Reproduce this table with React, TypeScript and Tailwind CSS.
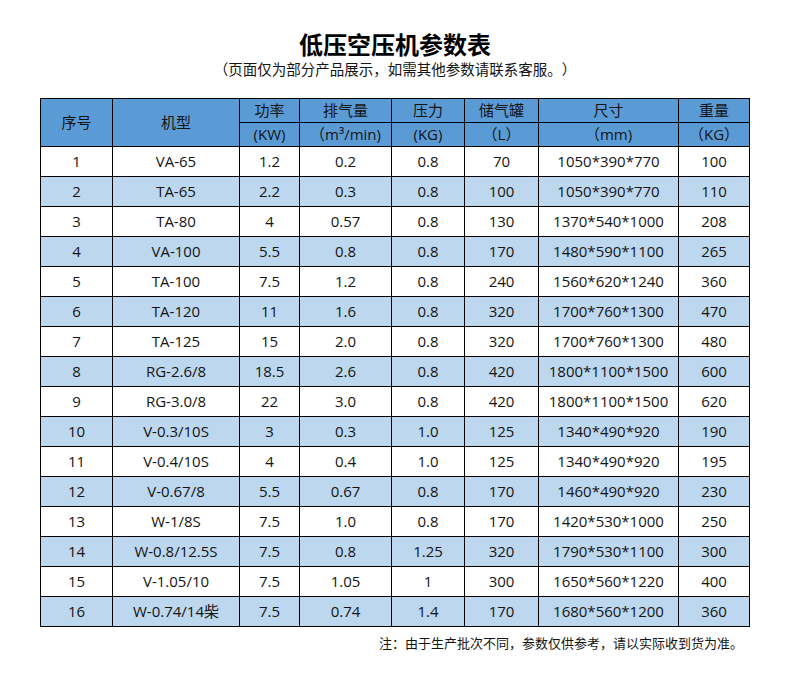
import React from "react";

type Row = [string, string, string, string, string, string, string, string];

const rows: Row[] = [
  ["1", "VA-65", "1.2", "0.2", "0.8", "70", "1050*390*770", "100"],
  ["2", "TA-65", "2.2", "0.3", "0.8", "100", "1050*390*770", "110"],
  ["3", "TA-80", "4", "0.57", "0.8", "130", "1370*540*1000", "208"],
  ["4", "VA-100", "5.5", "0.8", "0.8", "170", "1480*590*1100", "265"],
  ["5", "TA-100", "7.5", "1.2", "0.8", "240", "1560*620*1240", "360"],
  ["6", "TA-120", "11", "1.6", "0.8", "320", "1700*760*1300", "470"],
  ["7", "TA-125", "15", "2.0", "0.8", "320", "1700*760*1300", "480"],
  ["8", "RG-2.6/8", "18.5", "2.6", "0.8", "420", "1800*1100*1500", "600"],
  ["9", "RG-3.0/8", "22", "3.0", "0.8", "420", "1800*1100*1500", "620"],
  ["10", "V-0.3/10S", "3", "0.3", "1.0", "125", "1340*490*920", "190"],
  ["11", "V-0.4/10S", "4", "0.4", "1.0", "125", "1340*490*920", "195"],
  ["12", "V-0.67/8", "5.5", "0.67", "0.8", "170", "1460*490*920", "230"],
  ["13", "W-1/8S", "7.5", "1.0", "0.8", "170", "1420*530*1000", "250"],
  ["14", "W-0.8/12.5S", "7.5", "0.8", "1.25", "320", "1790*530*1100", "300"],
  ["15", "V-1.05/10", "7.5", "1.05", "1", "300", "1650*560*1220", "400"],
  ["16", "W-0.74/14柴", "7.5", "0.74", "1.4", "170", "1680*560*1200", "360"],
];

const colWidths = ["w-[72px]", "w-[127px]", "w-[60px]", "w-[92px]", "w-[73px]", "w-[74px]", "w-[140px]", "w-[71px]"];

const cell = "border border-black text-center p-0";
const head = cell + " font-normal";

export default function App() {
  return (
    <div
      className="w-[790px] h-[679px] bg-white text-[#141414] [text-spacing-trim:space-all]"
      style={{ fontFamily: '"Open Sans", "Noto Sans CJK SC", sans-serif' }}
    >
      {/* Title */}
      <div className="pt-[30px] text-center">
        <h1 className="text-[24px] font-bold leading-[30px] text-black">低压空压机参数表</h1>
        <p className="text-[14.5px] leading-[20px]">（页面仅为部分产品展示，如需其他参数请联系客服。）</p>
      </div>

      {/* Table */}
      <table className="ml-[40px] mt-[18px] w-[710px] table-fixed border-collapse text-[15px] leading-none">
        <colgroup>
          {colWidths.map((w, i) => (
            <col key={i} className={w} />
          ))}
        </colgroup>
        <thead className="bg-[#5b9bd5]">
          <tr className="h-[24px]">
            <th rowSpan={2} className={head}>序号</th>
            <th rowSpan={2} className={head}>机型</th>
            <th className={head}>功率</th>
            <th className={head}>排气量</th>
            <th className={head}>压力</th>
            <th className={head}>储气罐</th>
            <th className={head}>尺寸</th>
            <th className={head}>重量</th>
          </tr>
          <tr className="h-[24px]">
            <th className={head}>(KW)</th>
            <th className={head}>（m³/min)</th>
            <th className={head}>(KG)</th>
            <th className={head}>（L）</th>
            <th className={head}>（mm)</th>
            <th className={head}>（KG）</th>
          </tr>
        </thead>
        <tbody>
          {rows.map((r, i) => (
            <tr key={r[0]} className={i % 2 === 1 ? "h-[30px] bg-[#bdd7ee]" : "h-[30px] bg-white"}>
              {r.map((v, j) => (
                <td key={j} className={cell}>
                  {v}
                </td>
              ))}
            </tr>
          ))}
        </tbody>
      </table>

      {/* Note */}
      <p className="mt-[6px] w-[743px] text-right text-[13px] leading-[20px]">
        注：由于生产批次不同，参数仅供参考，请以实际收到货为准。
      </p>
    </div>
  );
}
